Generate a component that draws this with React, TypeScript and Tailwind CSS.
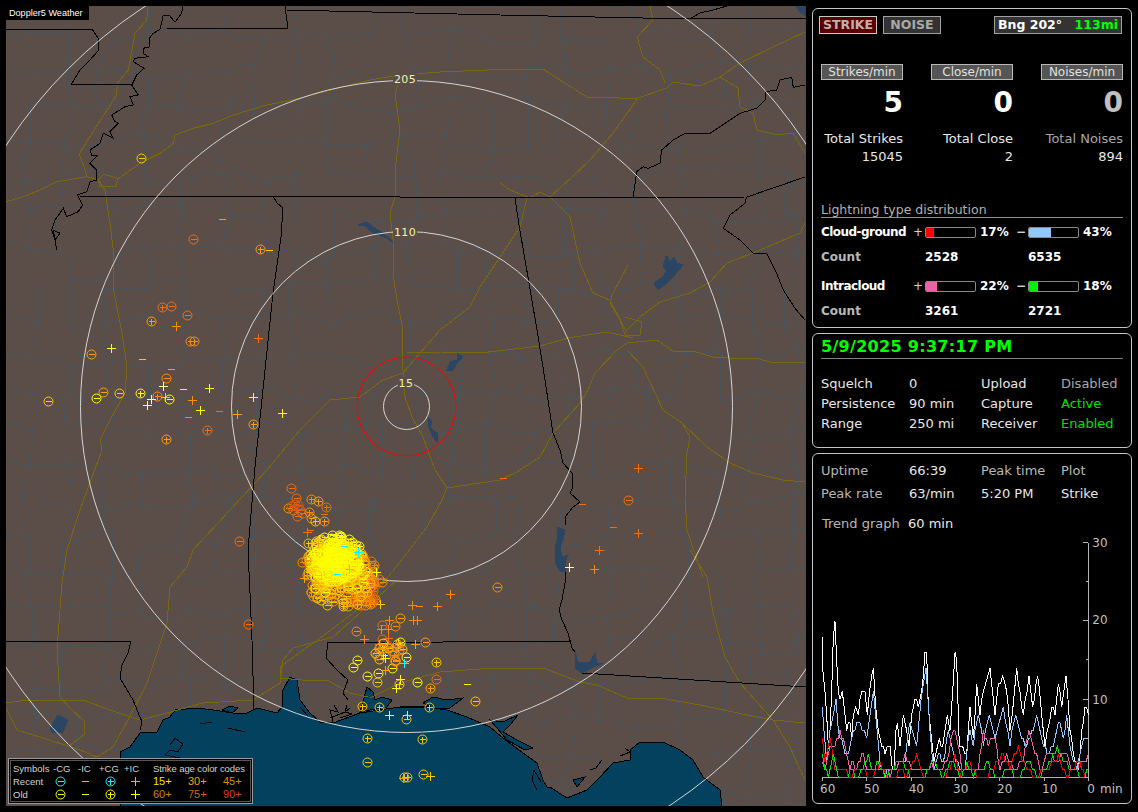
const FONT = "[font-family:'DejaVu_Sans',sans-serif]";
const SMALL = "[font-family:'Liberation_Sans',sans-serif]";

const Y = "#ffff00";
const A = "#ffc800";
const B = "#ffa000";
const C = "#ff8c00";
const D = "#f07010";
const E = "#e05a10";
const L = "#fff8a0";
const CY = "#00ffff";

type Kind = "m" | "p" | "-" | "+";
type Hit = [number, number, Kind, string];

function rng(seed: number) {
  let s = seed;
  return () => {
    s = (s + 0x6d2b79f5) | 0;
    let t = Math.imul(s ^ (s >>> 15), 1 | s);
    t = (t + Math.imul(t ^ (t >>> 7), 61 | t)) ^ t;
    return ((t ^ (t >>> 14)) >>> 0) / 4294967296;
  };
}

// polyline points read off a 3x crop
function zoomed(ox: number, oy: number, pts: number[]) {
  const out: string[] = [];
  for (let i = 0; i < pts.length; i += 2) {
    out.push(`${(ox + pts[i] / 3).toFixed(1)},${(oy + pts[i + 1] / 3).toFixed(1)}`);
  }
  return out.join(" ");
}

function countyLines() {
  const r = rng(77);
  const nx = 23;
  const ny = 24;
  const v: [number, number][][] = [];
  for (let i = 0; i < nx; i++) {
    v.push([]);
    for (let j = 0; j < ny; j++) {
      v[i].push([-6 + i * 38 + (r() - 0.5) * 20, -2 + j * 36 + (r() - 0.5) * 18]);
    }
  }
  let d = "";
  const edge = (a: [number, number], b: [number, number]) => {
    if (r() < 0.12) return;
    if (r() < 0.4) {
      d += `M${a[0].toFixed(0)} ${a[1].toFixed(0)}L${b[0].toFixed(0)} ${a[1].toFixed(0)}L${b[0].toFixed(0)} ${b[1].toFixed(0)}`;
      return;
    }
    const w = () => (r() - 0.5) * 10;
    const p1 = [a[0] + (b[0] - a[0]) * 0.3 + w(), a[1] + (b[1] - a[1]) * 0.3 + w()];
    const p2 = [a[0] + (b[0] - a[0]) * 0.65 + w(), a[1] + (b[1] - a[1]) * 0.65 + w()];
    d += `M${a[0].toFixed(0)} ${a[1].toFixed(0)}L${p1[0].toFixed(0)} ${p1[1].toFixed(0)}L${p2[0].toFixed(0)} ${p2[1].toFixed(0)}L${b[0].toFixed(0)} ${b[1].toFixed(0)}`;
  };
  for (let i = 0; i < nx; i++) {
    for (let j = 0; j < ny; j++) {
      if (i < nx - 1) edge(v[i][j], v[i + 1][j]);
      if (j < ny - 1) edge(v[i][j], v[i][j + 1]);
    }
  }
  return d;
}

const COUNTIES = countyLines();

const HIGHWAYS = [
  zoomed(0, 0, [445, 18, 440, 60, 405, 100, 385, 210, 352, 250, 350, 285, 260, 425, 238, 462, 262, 530, 295, 540, 315, 570, 330, 670, 340, 750]),
  "113,250 113,287 122,333 127,367 125,393 110,420 100,440 102,450 80,510 67,550 62,583 57,650 60,697 70,708 85,722 84,735 70,745",
  zoomed(0, 0, [18, 605, 70, 590, 120, 570, 170, 545, 262, 530, 295, 540, 300, 560, 350, 560, 352, 535, 312, 523, 295, 540]),
  zoomed(0, 0, [350, 540, 420, 490, 480, 460, 520, 430, 525, 405, 580, 385, 640, 370, 700, 345, 800, 315, 900, 295]),
  "300,98 370,80 400,75 440,72 510,69 543,69 560,80 587,97 613,97 625,99 638,98 667,88 673,82 700,86 720,77 740,63 773,47 805,32",
  "395,170 400,130 395,95 400,75",
  "395,170 395,197 390,213 394,247 393,275 397,300 402,325 402,358 405,397 412,417 423,437 435,470 447,488 442,500 427,527 407,553 370,600 327,633 280,667 280,678 302,680 327,680 350,693 368,697",
  "447,488 480,483 500,480 517,472 540,457 553,433 580,403 588,390 595,373 617,350 627,343",
  "627,333 610,300 593,293 580,263 570,217 550,197 540,192 530,198 510,190 500,183",
  "527,198 520,227 480,287 470,307 440,330 420,353 403,373 383,380 360,397 330,400 300,430 267,470 193,550 187,567 170,587 167,623 147,683 128,720 113,747 97,757",
  "407,352 440,352 480,353 540,346 568,338 607,332 633,338",
  "627,343 657,340 673,351 693,351 713,357 730,358 757,358 773,363 805,362",
  "627,350 643,367 663,410 682,423 690,437 687,453 685,497 687,530 697,560 703,577",
  "690,550 707,577 713,613 725,657 740,683 773,720 790,747 805,780",
  "682,423 707,447 730,463 753,473 783,480 805,482",
  "650,6 653,20 637,37 643,57 660,70 665,83",
  "720,77 738,88 740,107 753,113 757,130 777,135 793,133 805,153",
  "638,98 613,133 590,160 572,177 550,197",
  "805,223 800,233 753,253 727,263 710,282 690,293 660,302 640,317 627,330",
  "628,265 613,293 610,303 620,320 625,335 640,335 642,322 625,317",
  "370,698 400,683 440,672 493,668 543,668 580,682 597,685 627,698 660,698 700,705 747,715 773,720 805,723",
  "6,703 27,700 83,700 110,710 140,720 167,713 203,703 253,700 280,683 283,660 293,648 333,637 397,580",
  "6,708 17,730 43,738 80,750 97,757",
];

const STATE_LINES = [
  "6,29 92,29 98,38 99,50 88,62 80,70 71,85 132,84",
  zoomed(0, 0, [548, 18, 545, 40, 525, 67, 507, 45, 490, 45, 480, 88, 460, 100, 448, 115, 450, 140, 430, 145, 430, 160, 445, 170, 405, 175, 400, 185, 432, 205, 410, 225, 395, 255, 415, 285, 390, 290, 400, 315, 375, 320, 335, 345, 345, 365, 355, 370, 330, 395, 340, 415, 310, 400, 300, 430, 270, 450, 275, 465, 295, 465, 270, 490, 290, 510, 290, 540, 270, 545, 260, 575, 232, 585, 248, 615, 235, 635, 200, 650, 190, 625, 165, 660, 155, 690, 165, 720, 180, 700, 160, 690, 170, 750]),
  "165,28 288,29 285,6",
  "286,10 500,15 690,19 806,18",
  "690,19 700,13 713,10 727,6",
  "80,196.5 273,196 527,198 747,197 805,177",
  zoomed(500, 0, [400, 590, 410, 515, 430, 500, 445, 505, 480, 490, 485, 450, 520, 420, 555, 400, 630, 400, 690, 360, 720, 340, 770, 325, 795, 300, 795, 275, 830, 270, 840, 240, 875, 232, 880, 262, 915, 255]),
  zoomed(500, 0, [740, 590, 735, 610, 690, 645, 670, 685, 720, 720, 760, 760, 800, 760, 830, 820, 850, 870, 885, 925, 915, 960]),
  "273,196 277,203 283,208 281,237 273,293 265,370 255,467 248,550 250,593 252,640 254,710",
  "515,198 519,225 529,283 537,330 543,367 553,433 560,450 563,463 572,473 573,487 570,493 580,502 573,507 565,517 565,525",
  "566,572 565,583 562,600 559,610 562,620 568,633 572,648 575,652",
  "328,642 443,642 570,641",
  "328,642 326,658 337,670 348,680 343,693 348,700",
  "582,673 806,687",
  "6,641 131,641 128,653 122,665 120,678 133,700 142,722 140,730",
];

const LAKES = [
  "358,225 367,222 373,227 383,233 395,244 387,238 373,233 365,226",
  "447,370 450,362 457,360 457,353 463,357 457,363 453,370",
  "428,417 432,422 430,428 437,433 437,442 433,437 429,427",
  "666,256 668,257 668,263 674,257 677,263 683,265 677,272 673,277 667,283 658,290 654,283 663,277 667,270 663,267",
  "557,527 565,530 563,540 560,547 562,557 568,555 565,562 566,572 560,571 555,562 555,547 558,537",
  "575,652 578,662 590,662 595,653 597,663 603,663 592,668 582,673 575,668",
  "50,728 58,715 68,720 63,732 53,733",
  "796,6 806,6 806,16 800,12",
];

const GULF = "120,806 120,752 130,747 140,733 147,732 157,732 163,720 170,717 175,710 197,708 213,710 233,713 247,713 257,708 277,713 282,707 283,690 290,677 297,680 300,700 310,713 320,722 333,723 360,713 393,708 427,707 447,710 467,717 490,727 503,738 523,753 537,763 543,780 547,787 550,787 567,798 587,790 600,777 613,763 630,760 630,750 640,742 663,742 680,750 693,760 703,777 720,790 722,806";

const BAYS = [
  "367,687 373,692 375,700 382,697 392,700 387,707 370,710 360,712",
  "423,703 433,697 447,700 463,698 450,708 433,708",
  "490,720 503,722 518,715 510,725 503,732 517,740 533,748 525,750 507,740 497,728",
  "573,780 585,777 577,787",
  "222,710 230,706 238,708 232,713",
];

const MARSH = [
  "330,718 345,712 352,714 340,718",
  "400,707 430,706",
  "170,745 175,738 183,744 178,752 170,750 165,755 180,758",
  "537,790 532,780 534,770 541,782",
  "590,770 596,768 602,760",
  "620,756 630,752 625,748",
  "200,724 212,722",
  "228,728 245,732",
  "347,705 345,712 350,708",
  "333,722 330,710 338,712 334,705",
  "300,707 308,716",
];

const HITS: Hit[] = [
  [222, 219, "-", B], [193, 239, "m", D], [260, 249, "p", B], [269, 250, "-", A],
  [162, 307, "p", D], [171, 306, "m", D], [187, 315, "m", D], [151, 321, "p", B],
  [176, 326, "+", C], [190, 341, "p", C], [194, 341, "p", C], [258, 338, "+", D],
  [91, 354, "m", B], [111, 348, "+", Y], [142, 359, "-", A], [171, 369, "-", B],
  [166, 378, "m", C], [163, 386, "+", L], [183, 389, "-", Y], [209, 388, "+", Y],
  [103, 392, "m", B], [96, 398, "m", Y], [119, 393, "m", A], [140, 393, "p", Y],
  [157, 396, "p", C], [165, 397, "+", A], [169, 399, "m", Y], [151, 399, "+", L],
  [147, 405, "+", L], [48, 401, "m", A], [192, 400, "+", C], [200, 410, "+", Y],
  [188, 417, "-", C], [219, 411, "-", D], [237, 414, "+", B], [253, 397, "+", Y],
  [282, 413, "+", Y], [253, 424, "p", B], [207, 430, "p", D], [166, 439, "p", B],
  [141, 158, "m", A], [239, 541, "m", D], [248, 624, "m", D],
  // NW of main cell
  [291, 488, "m", D], [296, 498, "m", D], [311, 499, "p", C], [318, 501, "p", B],
  [326, 507, "p", D], [324, 514, "-", D], [288, 508, "m", C], [293, 510, "m", D],
  [298, 505, "m", E], [300, 510, "m", E], [302, 513, "m", D], [297, 516, "m", D],
  [291, 506, "m", E], [295, 504, "m", E], [309, 512, "p", C], [311, 518, "m", B],
  [315, 521, "p", A], [324, 521, "p", B], [307, 532, "+", D], [310, 530, "-", D],
  // east
  [503, 478, "-", D], [497, 587, "m", C], [450, 594, "+", C], [412, 605, "+", C],
  [419, 606, "-", C], [437, 606, "+", C], [413, 620, "+", C], [417, 620, "+", C],
  [389, 620, "+", C], [400, 618, "m", B], [395, 626, "m", C], [382, 625, "m", D],
  [381, 629, "+", C], [388, 629, "+", C], [356, 631, "m", C], [364, 639, "+", C],
  [425, 642, "m", B], [415, 644, "+", B], [379, 644, "+", C],
  [638, 468, "+", D], [628, 500, "m", D], [613, 527, "-", D], [638, 533, "+", D],
  [599, 550, "+", D], [569, 567, "+", L], [594, 569, "+", C], [582, 504, "-", D],
  // south of the line
  [436, 662, "p", A], [379, 659, "m", A], [357, 660, "m", Y], [353, 667, "m", Y],
  [392, 668, "m", Y], [385, 670, "+", B], [378, 673, "m", Y], [367, 676, "m", Y],
  [377, 682, "m", A], [417, 682, "m", Y], [436, 679, "m", D], [430, 688, "p", B],
  [467, 684, "-", Y], [475, 701, "m", A], [362, 706, "p", A], [379, 707, "p", A],
  [429, 707, "p", A], [389, 715, "+", Y], [407, 715, "+", Y], [406, 719, "m", A],
  [367, 738, "p", A], [422, 739, "p", A], [423, 774, "m", A], [430, 776, "+", A],
  [404, 777, "p", A], [407, 777, "p", A], [403, 778, "+", B], [367, 762, "m", A],
  [406, 657, "m", Y], [395, 660, "m", B], [400, 642, "m", Y], [398, 643, "+", Y],
  [382, 647, "+", Y], [385, 658, "+", Y], [383, 655, "+", Y], [404, 663, "+", CY],
  [400, 679, "+", Y], [399, 684, "p", A], [396, 688, "+", Y],
];

function mainCell() {
  const r = rng(2025);
  const out: Hit[] = [];
  const blob = (n: number, cx: number, cy: number, rx: number, ry: number, colors: string[]) => {
    for (let i = 0; i < n; i++) {
      const a = r() * Math.PI * 2;
      const d = Math.sqrt(r());
      const roll = r();
      const kind: Kind = roll < 0.82 ? "m" : roll < 0.92 ? "p" : roll < 0.96 ? "-" : "+";
      out.push([cx + Math.cos(a) * d * rx, cy + Math.sin(a) * d * ry, kind, colors[Math.floor(r() * colors.length)]]);
    }
  };
  blob(22, 388, 650, 16, 13, [C, B, D, A]);
  blob(40, 364, 590, 17, 17, [D, C, E, B]);
  blob(20, 370, 575, 11, 14, [D, C]);
  blob(130, 338, 576, 34, 31, [B, C, A, A]);
  blob(110, 336, 570, 31, 29, [A, A, Y, B]);
  blob(190, 335, 559, 27, 25, [Y, Y, Y, A]);
  blob(70, 335, 555, 16, 15, [Y]);
  out.push(
    [332, 534, "-", Y], [308, 543, "p", A], [318, 543, "p", B], [359, 546, "p", Y],
    [376, 572, "+", Y], [382, 582, "m", C], [380, 604, "+", A], [372, 603, "m", D],
    [357, 604, "p", A], [302, 562, "m", C], [306, 560, "m", C], [304, 578, "+", B],
    [358, 552, "+", CY], [349, 569, "+", CY], [337, 574, "-", CY], [344, 546, "-", CY],
  );
  return out;
}

const CELL = mainCell();

function Strike({ x, y, kind, color }: { x: number; y: number; kind: Kind; color: string }) {
  const cx = Math.round(x) + 0.5;
  const cy = Math.round(y) + 0.5;
  return (
    <g stroke={color} fill="none">
      {(kind === "m" || kind === "p") && <circle cx={cx} cy={cy} r={4.5} shapeRendering="auto" />}
      {kind === "p" && <path d={`M${cx - 3} ${cy}H${cx + 3}M${cx} ${cy - 3}V${cy + 3}`} />}
      {kind === "m" && <path d={`M${cx - 3} ${cy}H${cx + 3}`} />}
      {kind === "-" && <path d={`M${cx - 3.5} ${cy}H${cx + 3.5}`} />}
      {kind === "+" && <path d={`M${cx - 4.5} ${cy}H${cx + 4.5}M${cx} ${cy - 4.5}V${cy + 4.5}`} />}
    </g>
  );
}

function RingLabel({ x, y, w, text }: { x: number; y: number; w: number; text: string }) {
  return (
    <g>
      <rect x={x - w / 2} y={y - 6} width={w} height={12} fill="#5b4e49" />
      <text x={x} y={y + 4} textAnchor="middle" fontSize={11} fill="#f0f4a8" fontFamily="'DejaVu Sans', sans-serif" letterSpacing={0.4}>
        {text}
      </text>
    </g>
  );
}

function WeatherMap() {
  return (
    <svg viewBox="6 6 800 800" width={800} height={800} className="block" shapeRendering="crispEdges">
      <rect x={6} y={6} width={800} height={800} fill="#5b4e49" />
      <path d={COUNTIES} fill="none" stroke="#4b545a" />
      <polygon points={GULF} fill="#03415f" stroke="#000" />
      {BAYS.map((p) => (
        <polygon key={p} points={p} fill="#03415f" stroke="#000" />
      ))}
      {MARSH.map((p) => (
        <polyline key={p} points={p} fill="none" stroke="#000" />
      ))}
      {LAKES.map((p) => (
        <polygon key={p} points={p} fill="#2a4662" stroke="#2a4662" />
      ))}
      {HIGHWAYS.map((p) => (
        <polyline key={p} points={p} fill="none" stroke="#7a6810" />
      ))}
      {STATE_LINES.map((p) => (
        <polyline key={p} points={p} fill="none" stroke="#000" />
      ))}
      <g fill="none" stroke="#d4d4d4" shapeRendering="auto">
        <circle cx={406.5} cy={406.5} r={23} />
        <circle cx={406.5} cy={406.5} r={175} />
        <circle cx={406.5} cy={406.5} r={326} />
        <circle cx={406.5} cy={406.5} r={478} />
        <circle cx={406.5} cy={406.5} r={49.5} stroke="#ff0000" />
      </g>
      <RingLabel x={405} y={79} w={24} text="205" />
      <RingLabel x={405} y={232} w={24} text="110" />
      <RingLabel x={406} y={383} w={16} text="15" />
      {HITS.map((h, i) => (
        <Strike key={i} x={h[0]} y={h[1]} kind={h[2]} color={h[3]} />
      ))}
      {CELL.map((h, i) => (
        <Strike key={i} x={h[0]} y={h[1]} kind={h[2]} color={h[3]} />
      ))}
    </svg>
  );
}

function LegendIcon({ kind, color }: { kind: Kind; color: string }) {
  return (
    <svg width={13} height={13} viewBox="0 0 13 13" shapeRendering="crispEdges" className="block">
      <Strike x={6} y={6} kind={kind} color={color} />
    </svg>
  );
}

function Legend() {
  return (
    <div className={`absolute left-[2px] bottom-[2px] w-[245px] h-[46px] bg-black border border-[#9a9a9a] p-px ${SMALL}`}>
      <div className="h-full border border-[#555] pl-[2px] pt-[1px] text-[9.5px] leading-[13px] text-[#d4d4d4] whitespace-nowrap">
        <div className="flex items-center h-[13px]">
          <span className="w-[40px]">Symbols</span>
          <span className="w-[25px]">-CG</span>
          <span className="w-[21px]">-IC</span>
          <span className="w-[25px]">+CG</span>
          <span className="w-[29px]">+IC</span>
          <span className="tracking-[-0.1px]">Strike age color codes</span>
        </div>
        <div className="flex items-center h-[13px]">
          <span className="w-[41px]">Recent</span>
          <span className="w-[25px]"><LegendIcon kind="m" color={CY} /></span>
          <span className="w-[25px]"><LegendIcon kind="-" color={CY} /></span>
          <span className="w-[25px]"><LegendIcon kind="p" color={CY} /></span>
          <span className="w-[24px]"><LegendIcon kind="+" color={CY} /></span>
          <span className="w-[35px] text-[11px] text-[#ffe000]">15+</span>
          <span className="w-[35px] text-[11px] text-[#f0a800]">30+</span>
          <span className="text-[11px] text-[#d89000]">45+</span>
        </div>
        <div className="flex items-center h-[13px]">
          <span className="w-[41px]">Old</span>
          <span className="w-[25px]"><LegendIcon kind="m" color={Y} /></span>
          <span className="w-[25px]"><LegendIcon kind="-" color={Y} /></span>
          <span className="w-[25px]"><LegendIcon kind="p" color={Y} /></span>
          <span className="w-[24px]"><LegendIcon kind="+" color={Y} /></span>
          <span className="w-[35px] text-[11px] text-[#d08000]">60+</span>
          <span className="w-[35px] text-[11px] text-[#d86010]">75+</span>
          <span className="text-[11px] text-[#d84010]">90+</span>
        </div>
      </div>
    </div>
  );
}

function Bar({ fill }: { fill: string }) {
  return (
    <div className="w-[51px] h-[11px] border border-[#8a8a8a] rounded-[2px] bg-black overflow-hidden">
      <div className={`h-full ${fill}`} />
    </div>
  );
}

function DistRow({ label, left, leftPct, right, rightPct }: { label: string; left: string; leftPct: string; right: string; rightPct: string }) {
  return (
    <div className="flex items-center h-[16px] text-[12px] font-bold text-white">
      <span className="w-[92px] tracking-[-0.55px]">{label}</span>
      <span className="w-[12px] font-normal text-[#d0d0d0]">+</span>
      <Bar fill={left} />
      <span className="w-[40px] pl-[4px]">{leftPct}</span>
      <span className="w-[12px] text-[#d0d0d0]">−</span>
      <Bar fill={right} />
      <span className="pl-[4px]">{rightPct}</span>
    </div>
  );
}

function CountRow({ a, b }: { a: string; b: string }) {
  return (
    <div className="flex items-center h-[16px] text-[12px] font-bold text-white">
      <span className="w-[104px] text-[#b8b8b8]">Count</span>
      <span className="w-[103px]">{a}</span>
      <span>{b}</span>
    </div>
  );
}

function Info({ cells, h }: { cells: [string, string][]; h: string }) {
  return (
    <div className={`grid grid-cols-[88px_72px_80px_1fr] items-center text-[13px] ${h}`}>
      {cells.map(([t, c]) => (
        <span key={t} className={c}>{t}</span>
      ))}
    </div>
  );
}

const panelCls = "border border-[#c4c4c4] rounded-[6px] w-[320px]";

const WHITE = [37,560,38,650,45,730,50,800,55,880,60,830,65,720,70,560,75,510,80,640,85,730,90,750,97,725,105,790,110,830,120,820,125,870,130,800,137,770,145,790,155,725,165,725,172,790,185,670,190,650,197,770,205,850,215,890,225,910,232,890,240,890,247,950,252,960,258,840,262,820,270,900,280,795,290,830,297,880,305,790,315,748,325,770,335,720,345,615,350,605,355,760,362,830,372,930,388,865,398,900,412,795,420,840,428,720,435,605,440,625,448,890,458,890,470,915,480,770,490,870,500,700,510,790,520,720,540,650,555,790,565,710,578,675,585,710,595,760,600,850,620,665,630,720,640,800,657,675,668,780,683,675,695,790,705,880,725,770,735,790,745,700,755,770,768,675,780,840,790,910,805,960,815,850,825,770,835,790];
const BLUE = [37,770,42,840,50,940,60,850,70,800,78,750,85,830,100,900,115,910,125,860,135,830,150,820,170,860,190,730,197,800,210,940,225,975,245,960,265,940,285,930,300,810,320,890,340,690,348,660,360,850,372,960,385,920,400,930,415,850,425,900,450,955,465,950,480,840,490,880,505,790,520,880,538,795,555,870,580,770,600,880,617,795,635,870,650,890,665,850,680,795,695,860,712,920,730,890,745,810,760,860,770,800,785,920,800,960,815,880,835,870];
const PINK = [37,940,45,950,60,900,75,890,90,840,105,890,120,950,130,935,140,965,155,910,170,950,190,960,210,950,240,975,260,950,285,915,305,960,320,970,345,955,365,945,385,965,410,940,430,840,440,860,455,950,475,960,505,960,520,840,535,880,555,870,570,960,590,915,610,960,640,930,657,840,675,905,690,960,715,910,740,930,765,910,790,960,815,935,835,920];
const RED = [37,870,45,930,60,870,75,960,90,970,105,960,120,982,140,960,160,965,190,980,210,940,230,982,260,975,275,950,290,982,320,910,340,975,375,975,395,982,420,960,435,910,450,975,480,935,500,975,540,970,580,915,600,950,625,890,650,960,680,980,705,960,730,940,745,920,770,982,810,930,825,982];
const GREEN = [37,910,45,950,55,975,70,920,85,975,110,982,125,960,140,982,165,940,175,910,190,970,205,935,225,982,245,960,265,940,280,935,300,982,320,982,345,982,370,935,395,982,425,935,455,982,470,935,490,975,510,960,535,935,555,982,600,960,625,982,655,935,680,982,710,960,742,890,765,935,790,960,820,982,835,960];

// one sample every 2px, value snapped to a whole count like the real trace; traced vertices are kept so peaks survive
function stepped(pts: number[]) {
  const unit = 23.4;
  const out: number[] = [];
  for (let i = 0; i < pts.length - 2; i += 2) {
    const x0 = pts[i];
    const x1 = pts[i + 2];
    const n = Math.max(1, Math.round((x1 - x0) / 6));
    for (let k = 0; k < n; k++) {
      const y = pts[i + 1] + ((pts[i + 3] - pts[i + 1]) * k) / n;
      out.push(x0 + ((x1 - x0) * k) / n, 982 - Math.round((982 - y) / unit) * unit);
    }
  }
  out.push(pts[pts.length - 2], 982 - Math.round((982 - pts[pts.length - 1]) / unit) * unit);
  return out.join(" ");
}

function TrendGraph() {
  const series: [number[], string][] = [
    [WHITE, "#ffffff"],
    [BLUE, "#90c8ff"],
    [PINK, "#f060a8"],
    [RED, "#ff0000"],
    [GREEN, "#00e000"],
  ];
  const labelProps = { fill: "#c0c0c0", fontSize: 36, fontFamily: "'DejaVu Sans', sans-serif" };
  return (
    <svg viewBox="9 255 954 804" width={318} height={268} className="block">
      <g shapeRendering="crispEdges" stroke="#b4b4b4" strokeWidth={3} fill="none">
        <path d="M835 278V982H37" />
        <path d="M820 278H835M828 395H835M820 510H835M828 628H835M820 748H835M828 865H835" />
        <path d="M37 982V994M170 982V994M303 982V994M436 982V994M569 982V994M702 982V994M835 982V994" />
      </g>
      {series.map(([pts, color]) => (
        <polyline key={color} points={stepped(pts)} fill="none" stroke={color} strokeWidth={3} strokeLinejoin="miter" shapeRendering="crispEdges" />
      ))}
      <text x={847} y={291} {...labelProps}>30</text>
      <text x={847} y={523} {...labelProps}>20</text>
      <text x={847} y={761} {...labelProps}>10</text>
      <text x={30} y={1028} {...labelProps}>60</text>
      <text x={162} y={1028} {...labelProps}>50</text>
      <text x={296} y={1028} {...labelProps}>40</text>
      <text x={429} y={1028} {...labelProps}>30</text>
      <text x={561} y={1028} {...labelProps}>20</text>
      <text x={696} y={1028} {...labelProps}>10</text>
      <text x={832} y={1028} {...labelProps}>0</text>
      <text x={870} y={1028} {...labelProps}>min</text>
    </svg>
  );
}

export default function App() {
  return (
    <div className={`w-[1138px] h-[812px] bg-black flex gap-[6px] p-[6px] overflow-hidden ${FONT}`}>
      <div className="relative w-[800px] h-[800px] shrink-0">
        <WeatherMap />
        <div className={`absolute left-0 top-0 h-[14px] w-[83px] bg-black text-white text-[9.1px] leading-[14px] pl-[3px] whitespace-nowrap ${SMALL}`}>
          Doppler5 Weather
        </div>
        <Legend />
      </div>

      <div className="flex flex-col gap-[5px] mt-[2px]">
        {/* Counters */}
        <div className={`${panelCls} h-[320px] px-[8px] pt-[7px]`}>
          <div className="flex -ml-[2px] h-[18px] font-bold text-[12.5px] leading-[16px]">
            <div className="w-[58px] text-center bg-[#560000] border border-[#c8c8c8] text-[#c0b0b0]">STRIKE</div>
            <div className="w-[58px] ml-[6px] text-center bg-[#333] border border-[#a0a0a0] text-[#a8a8a8]">NOISE</div>
            <div className="w-[128px] ml-[53px] flex justify-between px-[3px] bg-[#333] border border-[#a0a0a0] text-white">
              <span>Bng 202°</span>
              <span className="text-[#00ff00]">113mi</span>
            </div>
          </div>

          <div className="mt-[30px] grid grid-cols-[82px_82px_82px] gap-x-[28px]">
            {["Strikes/min", "Close/min", "Noises/min"].map((t) => (
              <div key={t} className="h-[16px] bg-[#555] border border-[#b8b8b8] text-center text-[12px] leading-[14px] text-[#e0e0e0]">{t}</div>
            ))}
          </div>
          <div className="mt-[5px] grid grid-cols-[82px_82px_82px] gap-x-[28px] text-right font-bold text-[28px] leading-[36px]">
            <span className="text-white">5</span>
            <span className="text-white">0</span>
            <span className="text-[#c0c0c0]">0</span>
          </div>
          <div className="mt-[9px] grid grid-cols-[82px_82px_82px] gap-x-[28px] text-right text-[13px] leading-[18px] whitespace-nowrap">
            <span className="text-[#e8e8e8]">Total Strikes</span>
            <span className="text-[#e8e8e8]">Total Close</span>
            <span className="text-[#a8a8a8]">Total Noises</span>
            <span className="text-[#e8e8e8]">15045</span>
            <span className="text-[#e8e8e8]">2</span>
            <span className="text-[#e8e8e8]">894</span>
          </div>

          <div className="mt-[37px] h-[15px] border-b border-[#909090] text-[12.5px] leading-[14px] text-[#b0b0b0]">
            Lightning type distribution
          </div>
          <div className="mt-[6px]">
            <DistRow label="Cloud-ground" left="w-[8px] bg-[#ff0000]" leftPct="17%" right="w-[22px] bg-[#90c8ff]" rightPct="43%" />
          </div>
          <div className="mt-[9px]"><CountRow a="2528" b="6535" /></div>
          <div className="mt-[13px]">
            <DistRow label="Intracloud" left="w-[11px] bg-[#f060a8]" leftPct="22%" right="w-[9px] bg-[#00f000]" rightPct="18%" />
          </div>
          <div className="mt-[9px]"><CountRow a="3261" b="2721" /></div>
        </div>

        {/* Clock and settings */}
        <div className={`${panelCls} h-[115px] px-[8px] pt-[3px]`}>
          <div className="h-[22px] border-b border-[#808080] font-bold text-[16px] tracking-[0.3px] leading-[20px] text-[#00ff00]">5/9/2025 9:37:17 PM</div>
          <div className="mt-[15px] text-[#e8e8e8]">
            <Info h="h-[20px]" cells={[["Squelch", ""], ["0", ""], ["Upload", ""], ["Disabled", "text-[#a8a8a8]"]]} />
            <Info h="h-[20px]" cells={[["Persistence", ""], ["90 min", ""], ["Capture", ""], ["Active", "text-[#00e000]"]]} />
            <Info h="h-[20px]" cells={[["Range", ""], ["250 mi", ""], ["Receiver", ""], ["Enabled", "text-[#00e000]"]]} />
          </div>
        </div>

        {/* Uptime and trend */}
        <div className={`${panelCls} h-[351px] pt-[5px]`}>
          <div className="px-[8px] text-[#e8e8e8]">
            <Info h="h-[23px]" cells={[["Uptime", "text-[#b8b8b8]"], ["66:39", ""], ["Peak time", "text-[#b8b8b8]"], ["Plot", "text-[#b8b8b8]"]]} />
            <Info h="h-[23px]" cells={[["Peak rate", "text-[#b8b8b8]"], ["63/min", ""], ["5:20 PM", ""], ["Strike", ""]]} />
            <div className="mt-[7px] h-[23px] flex items-center text-[13px]">
              <span className="w-[87px] pl-[1px] text-[#b8b8b8]">Trend graph</span>
              <span>60 min</span>
            </div>
          </div>
          <TrendGraph />
        </div>
      </div>
    </div>
  );
}
